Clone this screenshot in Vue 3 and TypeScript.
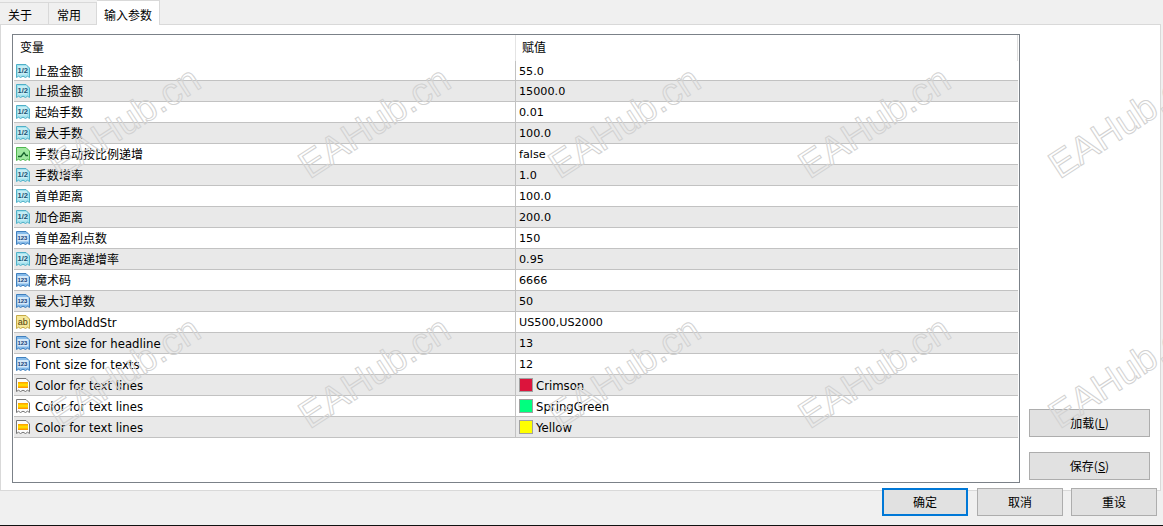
<script setup lang="ts">
type Kind = 'frac' | 'int' | 'bool' | 'str' | 'color'
interface Row { name: string; value: string; kind: Kind; swatch?: string }

const rows: Row[] = [
  { name: '止盈金额', value: '55.0', kind: 'frac' },
  { name: '止损金额', value: '15000.0', kind: 'frac' },
  { name: '起始手数', value: '0.01', kind: 'frac' },
  { name: '最大手数', value: '100.0', kind: 'frac' },
  { name: '手数自动按比例递增', value: 'false', kind: 'bool' },
  { name: '手数增率', value: '1.0', kind: 'frac' },
  { name: '首单距离', value: '100.0', kind: 'frac' },
  { name: '加仓距离', value: '200.0', kind: 'frac' },
  { name: '首单盈利点数', value: '150', kind: 'int' },
  { name: '加仓距离递增率', value: '0.95', kind: 'frac' },
  { name: '魔术码', value: '6666', kind: 'int' },
  { name: '最大订单数', value: '50', kind: 'int' },
  { name: 'symbolAddStr', value: 'US500,US2000', kind: 'str' },
  { name: 'Font size for headline', value: '13', kind: 'int' },
  { name: 'Font size for texts', value: '12', kind: 'int' },
  { name: 'Color for text lines', value: 'Crimson', kind: 'color', swatch: '#dc143c' },
  { name: 'Color for text lines', value: 'SpringGreen', kind: 'color', swatch: '#00ff7f' },
  { name: 'Color for text lines', value: 'Yellow', kind: 'color', swatch: '#ffff00' },
]
const marks = Array.from({ length: 10 }, (_, i) => i)
const page = 'M1.5 1.5H11L14.5 5V14.5L12.5 13.2L10.5 14.5L8 13.2L5.5 14.5L3.5 13.2L1.5 14.5Z'
const isCjk = (s: string): boolean => /[^\x00-\x7f]/.test(s)
</script>

<template>
  <div class="dialog">
    <div class="tabs">
      <div class="tab">关于</div>
      <div class="tab">常用</div>
      <div class="tab active">输入参数</div>
    </div>
    <div class="panel">
      <div class="table">
        <div class="row head">
          <div class="c1 headname">变量</div>
          <div class="c2 headval">赋值</div>
        </div>
        <div v-for="(r, i) in rows" :key="i" class="row" :class="{ odd: i % 2 === 1 }">
          <div class="c1">
            <svg class="icon" viewBox="0 0 16 16" width="16" height="16">
              <defs>
                <linearGradient id="cg" x1="0" y1="0" x2="0" y2="1">
                  <stop offset="0" stop-color="#ff9a00" />
                  <stop offset="0.5" stop-color="#ffe800" />
                  <stop offset="1" stop-color="#ff8a00" />
                </linearGradient>
              </defs>
              <template v-if="r.kind === 'frac'">
                <path :d="page" fill="#a4e2ee" stroke="#4fb0c8" />
                <rect x="3" y="3" width="9" height="8.5" fill="#c6eef5" />
                <text x="2.6" y="10.4" class="ico-t" fill="#1c4f70">1/2</text>
              </template>
              <template v-else-if="r.kind === 'int'">
                <path :d="page" fill="#86bbea" stroke="#3f7fbd" />
                <rect x="2.5" y="4" width="11" height="7.5" fill="#d6e9f8" />
                <text x="2.4" y="10.4" class="ico-n" fill="#123f78">123</text>
              </template>
              <template v-else-if="r.kind === 'bool'">
                <path :d="page" fill="#a0e8a0" stroke="#4fb44f" />
                <path d="M3 10.5H6L9 6.5L11 9.5H13" fill="none" stroke="#15602a" stroke-width="1.3" />
              </template>
              <template v-else-if="r.kind === 'str'">
                <path :d="page" fill="#f6e89a" stroke="#c4aa48" />
                <text x="2.8" y="10.6" class="ico-a" fill="#4f400c">ab</text>
              </template>
              <template v-else>
                <path :d="page" fill="#fcfcfc" stroke="#767676" />
                <rect x="3" y="5" width="10" height="6" fill="url(#cg)" />
              </template>
            </svg>
            <span class="name" :class="{ cjk: isCjk(r.name) }">{{ r.name }}</span>
          </div>
          <div class="c2">
            <span v-if="r.swatch" class="swatch" :style="{ background: r.swatch }"></span>
            <span class="val" :class="{ num: !r.swatch }">{{ r.value }}</span>
          </div>
        </div>
      </div>
      <div class="side">
        <button class="btn side-btn">加载(<u>L</u>)</button>
        <button class="btn side-btn">保存(<u>S</u>)</button>
      </div>
    </div>
    <div class="footer">
      <button class="btn foot-btn primary">确定</button>
      <button class="btn foot-btn">取消</button>
      <button class="btn foot-btn">重设</button>
    </div>
    <div class="marks">
      <div v-for="m in marks" :key="m" class="mark"><span>EAHub.cn</span></div>
    </div>
  </div>
</template>

<style scoped>
.dialog {
  position: relative;
  width: 1163px;
  height: 526px;
  box-sizing: border-box;
  background: #f0f0f0;
  border-bottom: 1px solid #111;
  overflow: hidden;
  display: flex;
  flex-direction: column;
  font-family: "DejaVu Sans", "Noto Sans CJK SC", sans-serif;
  font-size: 11.7px;
  color: #000;
}
.tabs {
  display: flex;
  align-items: flex-end;
  height: 24px;
  flex: none;
}
.tab {
  box-sizing: border-box;
  height: 22px;
  padding: 3px 0 0 8px;
  width: 48px;
  border: 1px solid #d9d9d9;
  border-bottom: none;
  border-left: none;
  font-family: "Noto Sans CJK SC", sans-serif;
  font-size: 12px;
  line-height: 17px;
}
.tab:first-child { width: 49px; }
.tab.active {
  position: relative;
  z-index: 1;
  width: 63px;
  height: 25px;
  margin-bottom: -1px;
  padding: 5px 0 0 7px;
  background: #fff;
  border-left: none;
}
.panel {
  flex: none;
  box-sizing: border-box;
  width: 1161px;
  height: 467px;
  background: #fff;
  border: 1px solid #d9d9d9;
  padding: 9px 10px 7px 11px;
  display: flex;
}
.table {
  box-sizing: border-box;
  width: 1008px;
  height: 449px;
  border: 1px solid #7b8188;
  padding-left: 1px;
  padding-right: 1px;
}
.row {
  display: flex;
  height: 21px;
  box-sizing: border-box;
  border-bottom: 1px solid #c2c2c2;
}
.row.odd { background: #e9e9e9; }
.row.head {
  height: 26px;
  border-bottom: none;
  border-right: 1px solid #dedede;
}
.row.head + .row { height: 20px; }
.c1 {
  box-sizing: border-box;
  width: 502px;
  display: flex;
  align-items: center;
  padding-left: 1px;
  border-right: 1px solid #c2c2c2;
  white-space: nowrap;
}
.c2 {
  flex: 1;
  display: flex;
  align-items: center;
  padding-left: 3px;
  white-space: nowrap;
}
.name { padding-top: 1px; }
.name.cjk {
  padding-top: 0;
  padding-bottom: 1px;
  font-family: "Noto Sans CJK SC", sans-serif;
  font-size: 12px;
}
.val { padding-top: 1px; }
.num { font-size: 11.2px; }
.head .c1, .head .c2 {
  font-family: "Noto Sans CJK SC", sans-serif;
  font-size: 12px;
  padding-bottom: 3px;
}
.head .c1 { border-right-color: #e4e4e4; padding-left: 6px; }
.head .c2 { padding-left: 6px; }
.icon { flex: none; display: block; margin-right: 4px; }
.ico-t { font: bold 7.5px "Liberation Sans", sans-serif; }
.ico-n { font: bold 6px "Liberation Sans", sans-serif; }
.ico-a { font: 9px "Liberation Sans", sans-serif; }
.swatch {
  box-sizing: border-box;
  width: 14px;
  height: 14px;
  border: 1px solid #a0a0a0;
  margin-right: 3px;
}
.side {
  margin-left: 9px;
  display: flex;
  flex-direction: column;
  justify-content: flex-end;
  gap: 15px;
  padding-bottom: 3px;
}
.btn {
  box-sizing: border-box;
  height: 28px;
  background: #e1e1e1;
  border: 1px solid #adadad;
  padding: 0 0 1px;
  font-family: "Noto Sans CJK SC", sans-serif;
  font-size: 12px;
  color: #000;
}
.side-btn { width: 121px; }
.footer {
  position: relative;
  z-index: 1;
  flex: none;
  display: flex;
  justify-content: flex-end;
  gap: 9px;
  margin-top: -3px;
  padding-right: 6px;
}
.foot-btn { width: 86px; }
.foot-btn:last-child { margin-left: -1px; }
.foot-btn.primary { border: 2px solid #0078d7; }
.marks {
  position: absolute;
  left: 0;
  top: -3px;
  display: grid;
  grid-template-columns: repeat(5, 250px);
  grid-auto-rows: 250px;
  pointer-events: none;
  z-index: 2;
}
.mark {
  display: flex;
  align-items: center;
  justify-content: center;
}
.mark span {
  display: block;
  transform: rotate(-33deg);
  font-family: "Liberation Sans", sans-serif;
  font-size: 38px;
  white-space: nowrap;
  color: transparent;
  -webkit-text-stroke: 1px #d2d2d2;
}
</style>
